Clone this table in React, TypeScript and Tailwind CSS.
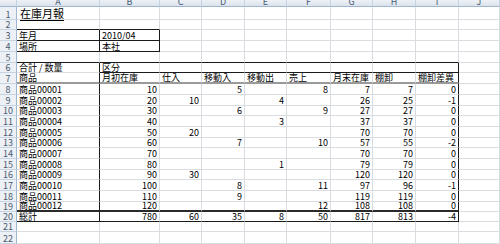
const LETTERS = ["", "A", "B", "C", "D", "E", "F", "G", "H", "I", "J"]

// cell values per row, index 1..10 = columns A..J
const ROWS: Record<number, (string | number)[]> = {
  3: ["年月", "2010/04"],
  4: ["場所", "本社"],
  6: ["合計 / 数量", "区分"],
  7: ["商品", "月初在庫", "仕入", "移動入", "移動出", "売上", "月末在庫", "棚卸", "棚卸差異"],
  8: ["商品00001", 10, "", 5, "", 8, 7, 7, 0],
  9: ["商品00002", 20, 10, "", 4, "", 26, 25, -1],
  10: ["商品00003", 30, "", 6, "", 9, 27, 27, 0],
  11: ["商品00004", 40, "", "", 3, "", 37, 37, 0],
  12: ["商品00005", 50, 20, "", "", "", 70, 70, 0],
  13: ["商品00006", 60, "", 7, "", 10, 57, 55, -2],
  14: ["商品00007", 70, "", "", "", "", 70, 70, 0],
  15: ["商品00008", 80, "", "", 1, "", 79, 79, 0],
  16: ["商品00009", 90, 30, "", "", "", 120, 120, 0],
  17: ["商品00010", 100, "", 8, "", 11, 97, 96, -1],
  18: ["商品00011", 110, "", 9, "", "", 119, 119, 0],
  19: ["商品00012", 120, "", "", "", 12, 108, 108, 0],
  20: ["総計", 780, 60, 35, 8, 50, 817, 813, -4],
}

function bottomClass(r: number, c: number) {
  if (c >= 1 && c <= 2 && r >= 2 && r <= 4) return "border-b border-b-[#1a1a1a]"
  if (c >= 1 && c <= 9 && r === 5) return "border-b border-b-[#1a1a1a]"
  if (c >= 2 && c <= 9 && r === 6) return "border-b border-b-[#1a1a1a]"
  if (c >= 1 && c <= 9 && r === 7) return "border-b-2 border-b-[#9a9a9a]"
  if (c >= 1 && c <= 9 && r === 19) return "border-b-2 border-b-[#2a2a2a]"
  if (c >= 1 && c <= 9 && r === 20) return "border-b border-b-[#1a1a1a]"
  return "border-b border-b-[#d9dce1]"
}

function rightClass(r: number, c: number) {
  if (r >= 3 && r <= 4 && (c === 1 || c === 2)) return "border-r border-r-[#1a1a1a]"
  if (r >= 6 && r <= 20 && (c === 1 || c === 9)) return "border-r border-r-[#1a1a1a]"
  return "border-r border-r-[#d9dce1]"
}

function Cell({ r, c }: { r: number; c: number }) {
  const v = ROWS[r]?.[c - 1]
  const isNum = typeof v === "number"
  return (
    <div
      className={`flex items-end overflow-visible whitespace-nowrap px-[2px] text-[9px] leading-[9px] text-black ${
        isNum ? "justify-end" : "justify-start"
      } ${bottomClass(r, c)} ${rightClass(r, c)}`}
    >
      {v === undefined || v === "" ? null : String(v)}
    </div>
  )
}

export default function App() {
  const rows = Array.from({ length: 22 }, (_, i) => i + 1)
  return (
    <div
      className="grid h-[244px] w-[500px] overflow-hidden bg-white grid-cols-[17px_83px_60px_42px_43px_42px_44px_42px_43px_43px_41px] grid-rows-[7px_13px_10px_11px_11px_11px_10px_11px_11px_11px_10px_11px_11px_10px_11px_11px_10px_11px_11px_10px_10px_10px_12px]"
      style={{ fontFamily: '"Noto Sans CJK JP", "Liberation Sans", sans-serif' }}
    >
      {/* column headers */}
      {LETTERS.map((l, c) => (
        <div
          key={"h" + c}
          className="flex items-end justify-center overflow-hidden border-b border-r border-b-[#9eb6ce] border-r-[#c5d3e2] bg-gradient-to-b from-[#eef2f7] to-[#dce3ec] text-[9px] leading-[9px] text-[#4a5b73]"
        >
          {l}
        </div>
      ))}

      {rows.map((r) => (
        <>
          <div
            key={"r" + r}
            className="flex items-end justify-center border-b border-r border-b-[#c5d3e2] border-r-[#9eb6ce] bg-[#edf0f4] text-[9px] leading-[9px] text-[#4a5b73]"
          >
            {r}
          </div>
          {r === 1 ? (
            <>
              <div className="flex items-end border-b border-r border-b-[#d9dce1] border-r-[#d9dce1] px-[3px] text-[11px] leading-[12px] text-black underline underline-offset-2">
                在庫月報
              </div>
              {LETTERS.slice(2).map((_, i) => (
                <div key={"t" + i} className="border-b border-r border-b-[#d9dce1] border-r-[#d9dce1]" />
              ))}
            </>
          ) : (
            LETTERS.slice(1).map((_, i) => <Cell key={r + "-" + i} r={r} c={i + 1} />)
          )}
        </>
      ))}
    </div>
  )
}
